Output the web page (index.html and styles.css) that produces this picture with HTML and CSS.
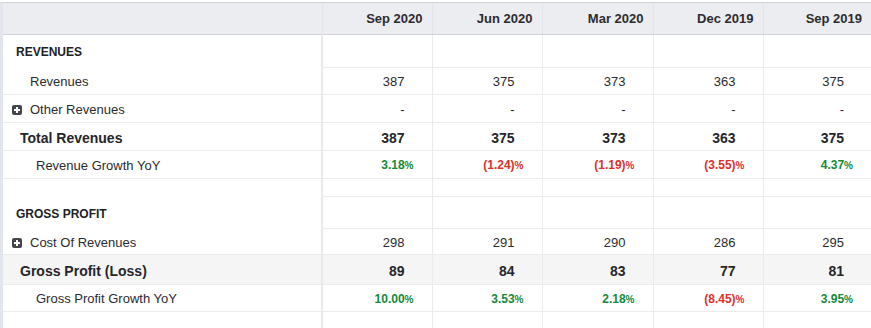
FILE: index.html
```html
<!DOCTYPE html>
<html>
<head>
<meta charset="utf-8">
<link rel="stylesheet" href="styles.css">
</head>
<body>
<div class="wrap">
<table class="fin">
  <colgroup>
    <col class="c-label"><col class="c-num"><col class="c-num"><col class="c-num3"><col class="c-num"><col class="c-last">
  </colgroup>
  <thead>
    <tr class="hdr">
      <th class="lbl"></th><th>Sep 2020</th><th>Jun 2020</th><th>Mar 2020</th><th>Dec 2019</th><th>Sep 2019</th>
    </tr>
  </thead>
  <tbody>
    <tr class="sec h33">
      <td class="lbl"><span class="sec-title">REVENUES</span></td><td></td><td></td><td></td><td></td><td></td>
    </tr>
    <tr class="h27">
      <td class="lbl"><span class="ind2">Revenues</span></td><td>387</td><td>375</td><td>373</td><td>363</td><td>375</td>
    </tr>
    <tr class="h28">
      <td class="lbl"><span class="plus"></span><span>Other Revenues</span></td><td>-</td><td>-</td><td>-</td><td>-</td><td>-</td>
    </tr>
    <tr class="h28 total">
      <td class="lbl"><span class="ind1">Total Revenues</span></td><td>387</td><td>375</td><td>373</td><td>363</td><td>375</td>
    </tr>
    <tr class="h28 growth">
      <td class="lbl"><span class="ind3">Revenue Growth YoY</span></td>
      <td class="pos">3.18<span class="pct">%</span></td>
      <td class="neg">(1.24)<span class="pct">%</span></td>
      <td class="neg">(1.19)<span class="pct">%</span></td>
      <td class="neg">(3.55)<span class="pct">%</span></td>
      <td class="pos">4.37<span class="pct">%</span></td>
    </tr>
    <tr class="sec h18">
      <td class="lbl"></td><td></td><td></td><td></td><td></td><td></td>
    </tr>
    <tr class="sec h32">
      <td class="lbl"><span class="sec-title">GROSS PROFIT</span></td><td></td><td></td><td></td><td></td><td></td>
    </tr>
    <tr class="h26">
      <td class="lbl"><span class="plus"></span><span>Cost Of Revenues</span></td><td>298</td><td>291</td><td>290</td><td>286</td><td>295</td>
    </tr>
    <tr class="h30 total shaded">
      <td class="lbl"><span class="ind1">Gross Profit (Loss)</span></td><td>89</td><td>84</td><td>83</td><td>77</td><td>81</td>
    </tr>
    <tr class="h27 growth">
      <td class="lbl"><span class="ind3">Gross Profit Growth YoY</span></td>
      <td class="pos">10.00<span class="pct">%</span></td>
      <td class="pos">3.53<span class="pct">%</span></td>
      <td class="pos">2.18<span class="pct">%</span></td>
      <td class="neg">(8.45)<span class="pct">%</span></td>
      <td class="pos">3.95<span class="pct">%</span></td>
    </tr>
    <tr class="h28">
      <td class="lbl"></td><td></td><td></td><td></td><td></td><td></td>
    </tr>
  </tbody>
</table>
</div>
</body>
</html>
```

FILE: styles.css
```css
html, body {
  margin: 0;
  padding: 0;
  background: #ffffff;
}
body {
  font-family: "Liberation Sans", Arial, sans-serif;
  color: #2b2b2f;
  overflow: hidden;
}
.wrap {
  margin-top: 2px;
  border-top: 1px solid #cfd2d8;
  border-left: 3px solid #e2e5ec;
  width: 868px;
}
.fin {
  border-collapse: collapse;
  table-layout: fixed;
  width: 868px;
}
.c-label { width: 319px; }
.c-num { width: 110px; }
.c-num3 { width: 111px; }
.c-last { width: 108px; }

.fin th, .fin td {
  padding: 0;
  vertical-align: middle;
  white-space: nowrap;
}
.hdr th {
  height: 31px;
  background: #ecedf1;
  border-bottom: 1px solid #cfd2d8;
  border-right: 1px solid #e2e4e9;
  text-align: right;
  padding-right: 9px;
  font-size: 13px;
  font-weight: 700;
  color: #2b2b30;
}
.hdr th:last-child { border-right: none; }
.hdr th.lbl { padding-right: 0; }

.fin td {
  border-bottom: 1px solid #ebebeb;
  border-right: 1px solid #ebebeb;
  text-align: right;
  padding-right: 27px;
  padding-top: 1px;
  font-size: 13px;
  color: #2b2b2f;
}
.fin td:last-child { border-right: none; }
.fin td.lbl {
  text-align: left;
  padding-right: 0;
  border-right: 2px solid #e9e9e9;
}
.sec td.lbl { border-bottom-color: #ffffff; }

.h33 td { height: 31px; }
.h32 td { height: 30px; }
.h30 td { height: 28px; }
.h28 td { height: 26px; }
.h27 td { height: 25px; }
.h26 td { height: 24px; }
.h18 td { height: 16px; }
.h28.total td { height: 25px; }
.h30.total td { height: 27px; }

.sec-title {
  padding-left: 13px;
  font-size: 12px;
  font-weight: 700;
  color: #222226;
}
.ind1 { padding-left: 17px; }
.ind2 { padding-left: 27px; }
.ind3 { padding-left: 33px; }

.plus {
  display: inline-block;
  vertical-align: -1px;
  width: 10px;
  height: 10px;
  margin-left: 9px;
  margin-right: 8px;
  border-radius: 2px;
  background:
    linear-gradient(#ffffff, #ffffff) center / 6px 2px no-repeat,
    linear-gradient(#ffffff, #ffffff) center / 2px 6px no-repeat,
    #45464b;
}

.total td {
  font-size: 14px;
  font-weight: 700;
  color: #26262b;
  padding-top: 2px;
}
.shaded td { background: #f5f5f5; }

.growth td.pos, .growth td.neg {
  font-size: 12px;
  font-weight: 700;
}
.pos { color: #138a3a !important; }
.neg { color: #e0302a !important; }
.pct {
  font-size: 10px;
  font-weight: 700;
  margin-right: -9px;
}
```
